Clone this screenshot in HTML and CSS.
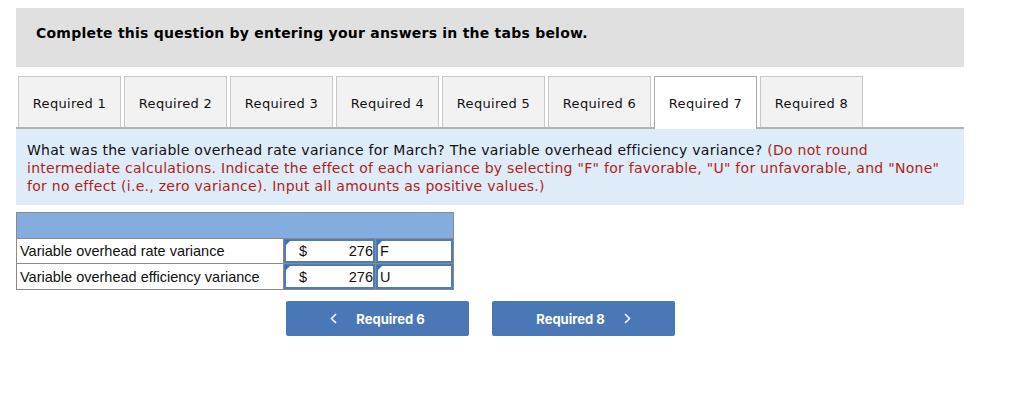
FILE: index.html
```html
<!DOCTYPE html>
<html>
<head>
<meta charset="utf-8">
<link rel="stylesheet" href="styles.css">
</head>
<body>
<div class="page">
  <div class="banner">Complete this question by entering your answers in the tabs below.</div>
  <div class="tabs">
    <div class="tab">Required 1</div>
    <div class="tab">Required 2</div>
    <div class="tab">Required 3</div>
    <div class="tab">Required 4</div>
    <div class="tab">Required 5</div>
    <div class="tab">Required 6</div>
    <div class="tab active">Required 7</div>
    <div class="tab">Required 8</div>
  </div>
  <div class="question">What was the variable overhead rate variance for March? The variable overhead efficiency variance? <span class="note">(Do not round intermediate calculations. Indicate the effect of each variance by selecting "F" for favorable, "U" for unfavorable, and "None" for no effect (i.e., zero variance). Input all amounts as positive values.)</span></div>
  <div class="grid">
    <div class="head"></div>
    <div class="label">Variable overhead rate variance</div>
    <div class="cell"><div class="inp"><span class="cur">$</span><span class="val">276</span></div></div>
    <div class="cell"><div class="inp">F</div></div>
    <div class="label">Variable overhead efficiency variance</div>
    <div class="cell"><div class="inp"><span class="cur">$</span><span class="val">276</span></div></div>
    <div class="cell"><div class="inp">U</div></div>
  </div>
  <div class="nav">
    <div class="btn"><svg class="chev left" width="7" height="11" viewBox="0 0 7 11"><polyline points="6,1 1.5,5.5 6,10" fill="none" stroke="#fff" stroke-width="1.6"/></svg><span>Required 6</span></div>
    <div class="btn"><span>Required 8</span><svg class="chev right" width="7" height="11" viewBox="0 0 7 11"><polyline points="1,1 5.5,5.5 1,10" fill="none" stroke="#fff" stroke-width="1.6"/></svg></div>
  </div>
</div>
</body>
</html>
```
FILE: styles.css
```css
html, body { margin: 0; padding: 0; background: #fff; }
.page { padding: 8px 0 0 16px; width: 948px; font-family: "DejaVu Sans", Verdana, sans-serif; }
.banner {
  background: #e0e0e0;
  height: 59px;
  box-sizing: border-box;
  padding: 16px 0 0 20px;
  font-weight: bold;
  font-size: 14px;
  letter-spacing: 0.23px;
  line-height: 18px;
  color: #000;
}
.tabs {
  margin-top: 9px;
  display: flex;
  gap: 3px;
  padding-left: 2px;
  border-bottom: 2px solid #b3b3b3;
  height: 51px;
}
.tab {
  width: 103px;
  height: 51px;
  box-sizing: border-box;
  border: 1px solid #c8c8c8;
  border-bottom: none;
  background: #f2f2f2;
  font-size: 13px;
  letter-spacing: 0.3px;
  color: #111;
  display: flex;
  align-items: center;
  justify-content: center;
  padding-top: 2px;
}
.tab.active { background: #fff; border-color: #a8a8a8; height: 53px; margin-bottom: -2px; padding-bottom: 2px; }
.question {
  background: #deebf8;
  padding: 12px 11px 10px 11px;
  font-size: 14px;
  letter-spacing: 0.27px;
  line-height: 18px;
  color: #111;
  height: 76px;
  box-sizing: border-box;
}
.note { color: #b01e17; }
.grid {
  margin-top: 7px;
  display: grid;
  grid-template-columns: 266px 91px 77px;
  grid-template-rows: 25px 24px 25px;
  gap: 1px;
  width: max-content;
  background: #8a8a8a;
  border: 1px solid #8a8a8a;
  font-family: "Liberation Sans", Arial, sans-serif;
  font-size: 14.5px;
  color: #111;
}
.head { grid-column: 1 / 4; background: #84acdf; }
.label { background: #fff; padding-left: 3px; display: flex; align-items: center; }
.cell { background: #fff; }
.inp {
  position: relative;
  height: 100%;
  box-sizing: border-box;
  border: 2px solid #4d7cba;
  display: flex;
  align-items: center;
  padding: 0 0 0 2px;
}
.inp::before {
  content: "";
  position: absolute;
  left: -1px;
  top: -1px;
  border-top: 6px solid #3a6dc4;
  border-right: 6px solid transparent;
}
.cur { margin-left: 11px; }
.val { margin-left: auto; }
.nav { display: flex; gap: 23px; margin: 11px 0 0 270px; }
.btn {
  width: 183px;
  height: 35px;
  box-sizing: border-box;
  background: #4a77b5;
  border-radius: 2px;
  color: #fff;
  font-family: Inter, Roboto, sans-serif;
  font-weight: bold;
  font-size: 13px;
  display: flex;
  align-items: center;
  justify-content: center;
}
.chev.left { margin-right: 19px; }
.chev.right { margin-left: 19px; }
```
